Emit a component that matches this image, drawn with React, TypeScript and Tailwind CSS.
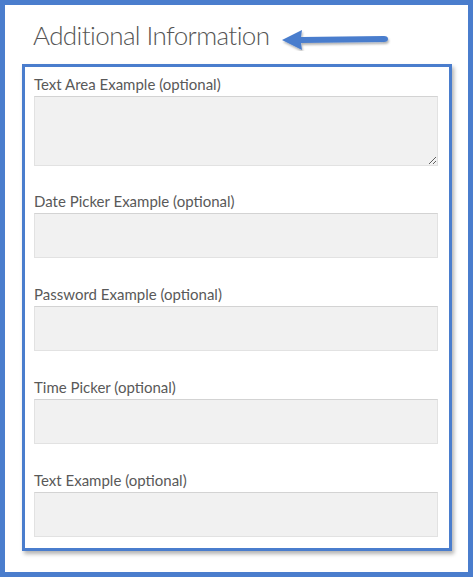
import React from "react";

function Field({ label, children, className = "" }: { label: string; children: React.ReactNode; className?: string }) {
  return (
    <div className={className}>
      <div className="text-[15px] leading-[20px] text-[#595959] mb-[2px]">{label}</div>
      {children}
    </div>
  );
}

const inputCls =
  "block w-full h-[45px] bg-[#f1f1f1] border border-[#e2e2e2] border-t-[#d3d3d3] outline-none";

export default function App() {
  return (
    <div
      className="w-[473px] h-[577px] border-[5px] border-[#4a7dcd] bg-white pl-[17px] pr-[16px]"
      style={{ fontFamily: "Lato, 'Noto Sans', sans-serif" }}
    >
      <div className="flex pt-[14px] pl-[11px] h-[59px] items-start">
        <h1 className="text-[26px] leading-[32px] font-light tracking-[-0.6px] text-[#555]">Additional Information</h1>
        <svg width="112" height="26" viewBox="0 0 112 26" className="ml-[11px] mt-[6px]">
          <defs>
            <filter id="sh" x="-10%" y="-30%" width="130%" height="180%">
              <feDropShadow dx="1" dy="2" stdDeviation="1.2" floodColor="#000" floodOpacity="0.3" />
            </filter>
          </defs>
          <g filter="url(#sh)">
            <path d="M2 15 L22 5 L21 12 L104 11 Q108 11 108 14 Q108 17 104 17 L21 18 L22 25 Z" fill="#4a7dcd" />
          </g>
        </svg>
      </div>
      <div className="border-[3px] border-[#4a7dcd] shadow-[2px_3px_4px_rgba(0,0,0,0.3)] pt-[7px] pb-[11px] pl-[9px] pr-[11px]">
        <Field label="Text Area Example (optional)">
          <textarea className="block w-full h-[70px] bg-[#f1f1f1] border border-[#e2e2e2] border-t-[#d3d3d3] outline-none resize-y" />
        </Field>
        <Field label="Date Picker Example (optional)" className="mt-[25px]">
          <input type="text" className={inputCls} />
        </Field>
        <Field label="Password Example (optional)" className="mt-[26px]">
          <input type="password" className={inputCls} />
        </Field>
        <Field label="Time Picker (optional)" className="mt-[26px]">
          <input type="text" className={inputCls} />
        </Field>
        <Field label="Text Example (optional)" className="mt-[26px]">
          <input type="text" className={inputCls} />
        </Field>
      </div>
    </div>
  );
}
